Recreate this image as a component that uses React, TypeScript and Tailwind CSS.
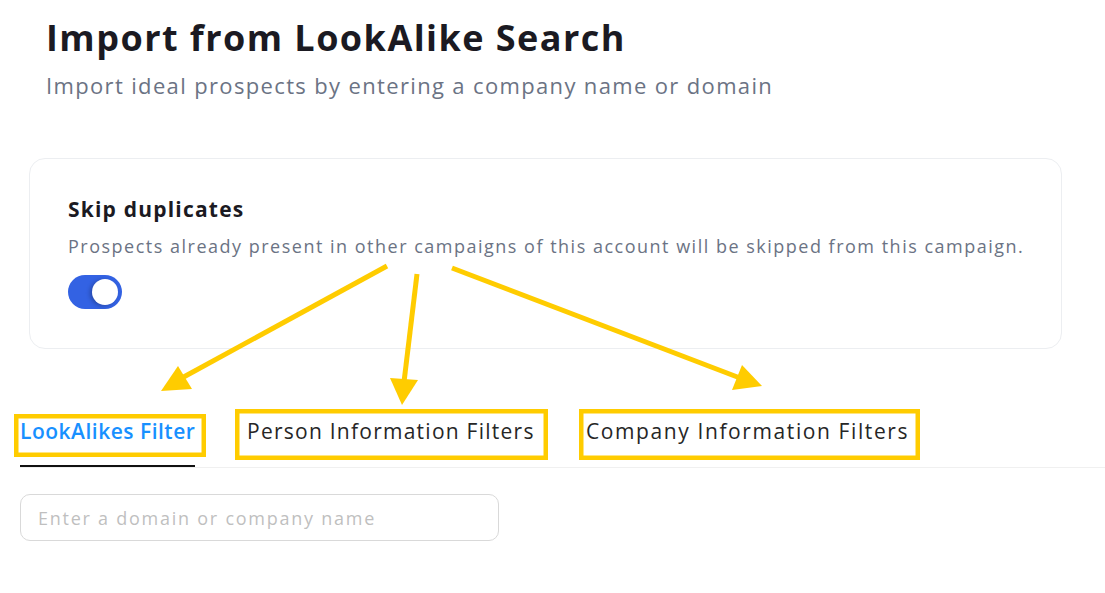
export default function App() {
  return (
    <main className="relative w-full h-[593px] overflow-hidden bg-white pl-5 font-['Open_Sans',sans-serif]">
      {/* Header */}
      <div className="pl-[26px] pt-4">
        <h1 className="text-[36px] leading-[44px] font-bold tracking-[1.45px] text-[#1b1a22]">Import from LookAlike Search</h1>
        <p className="mt-[10px] text-[22px] leading-[30px] tracking-[1.35px] text-[#6b7384]">
          Import ideal prospects by entering a company name or domain
        </p>
      </div>

      {/* Skip duplicates card */}
      <div className="mt-[58px] ml-[9px] w-[1033px] rounded-2xl border border-[#eceef1] pl-[38px] pt-9 pb-[39px]">
        <h2 className="text-[21px] leading-[28px] font-bold tracking-[1.2px] text-[#1b1a22]">Skip duplicates</h2>
        <p className="mt-[10px] text-[18px] leading-[26px] tracking-[1.5px] text-[#6b7384]">
          Prospects already present in other campaigns of this account will be skipped from this campaign.
        </p>
        <div className="mt-4 flex h-[34px] w-[54px] items-center justify-end rounded-full bg-[#3362e3] px-1">
          <div className="h-[26px] w-[26px] rounded-full bg-white shadow-[-2px_1px_4px_rgba(0,0,0,0.25)]" />
        </div>
      </div>

      {/* Tabs */}
      <div className="mt-[67px] flex items-end gap-[52px] border-b border-[#f0f0f0]">
        <div className="w-[175px] whitespace-nowrap border-b-2 border-[#111] pb-[19px] text-[21px] leading-[30px] font-semibold tracking-[0.5px] text-[#1890ff]">
          LookAlikes Filter
        </div>
        <div className="w-[287px] whitespace-nowrap border-b-2 border-transparent pb-[19px] text-[21px] leading-[30px] tracking-[1.25px] text-[#262626]">
          Person Information Filters
        </div>
        <div className="w-[322px] whitespace-nowrap border-b-2 border-transparent pb-[19px] text-[21px] leading-[30px] tracking-[1.6px] text-[#262626]">
          Company Information Filters
        </div>
      </div>

      <input
        type="text"
        placeholder="Enter a domain or company name"
        className="mt-[26px] block h-[47px] w-[479px] rounded-[10px] border border-[#d9d9d9] px-[17px] text-[18px] tracking-[1.75px] outline-none placeholder:text-[#bfbfbf]"
      />

      {/* Annotation overlay */}
      <svg className="pointer-events-none absolute left-0 top-0" width="1105" height="593" viewBox="0 0 1105 593">
        <g fill="none" stroke="#ffcc00" strokeWidth="4.5">
          <rect x="16.25" y="416.25" width="187.5" height="38.5" />
          <rect x="237.25" y="411.25" width="308.5" height="46.5" />
          <rect x="581.25" y="411.25" width="336.5" height="46.5" />
        </g>
        <g stroke="#ffcc00" strokeWidth="5" strokeLinecap="butt">
          <line x1="387" y1="266" x2="180" y2="379" />
          <line x1="417" y1="274" x2="404" y2="382" />
          <line x1="452" y1="268" x2="740" y2="378" />
        </g>
        <g fill="#ffcc00">
          <polygon points="161,391 178,366 192,389" />
          <polygon points="402,405 390,378 418,380" />
          <polygon points="762,386 742,365 732,390" />
        </g>
      </svg>
    </main>
  );
}
